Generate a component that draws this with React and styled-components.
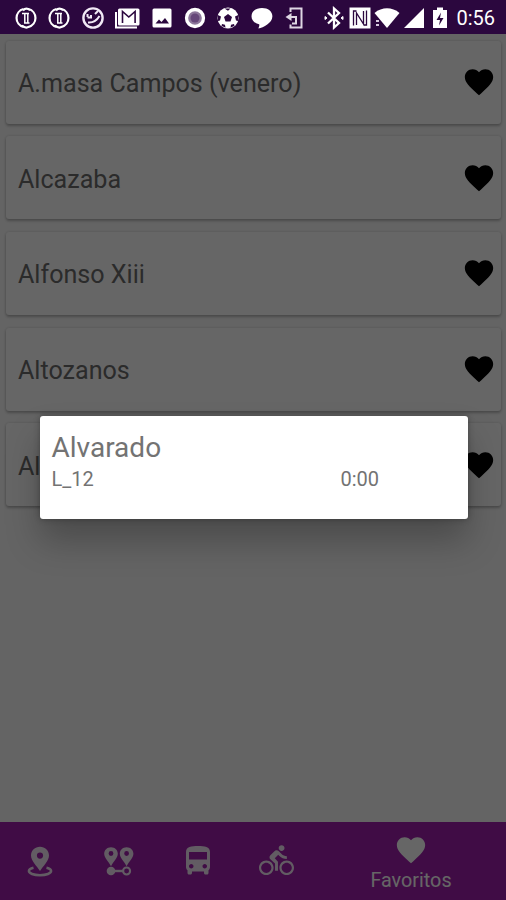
import React from 'react';
import styled, { createGlobalStyle } from 'styled-components';
import { MdFavorite, MdDirectionsBus, MdDirectionsBike } from 'react-icons/md';

const stops = ['A.masa Campos (venero)', 'Alcazaba', 'Alfonso Xiii', 'Altozanos', 'Alvarado'];

const GlobalStyle = createGlobalStyle`
    * {
        box-sizing: border-box;
    }
    body {
        margin: 0;
        font-family: Roboto, "Liberation Sans", sans-serif;
    }
    svg {
        display: block;
    }
`;

const CoinIcon = () => (
    <Glyph viewBox="0 0 24 24">
        <path d="M9.5 3A9.3 9.3 0 0 0 9.5 21M14.5 3A9.3 9.3 0 0 1 14.5 21M9 4.5Q12 1 16 4M8 19.5Q12 23 15 20.5" fill="none" stroke="#fff" strokeWidth="2.2" />
        <path d="M8 7.500h7M10.800 7v10M13.800 7v10M10 17h5.500" fill="none" stroke="#fff" strokeWidth="1.5" />
    </Glyph>
);

const FaceIcon = () => (
    <Glyph viewBox="0 0 24 24">
        <circle cx="12" cy="12" r="9.6" fill="none" stroke="#f1e9f5" strokeWidth="2.4" />
        <path d="M6.5 8v3M6.5 11.5h3.5V9M14 8l3-3M7 16.5c5 .5 8.500-1.500 11.500-6.500" fill="none" stroke="#f1e9f5" strokeWidth="2" />
    </Glyph>
);

const MailIcon = () => (
    <Glyph viewBox="0 0 26 24" $width={26}>
        <path d="M2 6v15.5h21" fill="none" stroke="#fff" strokeWidth="2" />
        <rect x="4" y="2.5" width="21.5" height="17" rx="1.5" fill="#fff" />
        <path d="M8.5 17V5.5l6.3 5.5 6.3-5.5V17" fill="none" stroke="#2b073e" strokeWidth="1.6" />
    </Glyph>
);

const ImageIcon = () => (
    <Glyph viewBox="0 0 24 24">
        <rect x="2.5" y="2.5" width="19" height="19" rx="1.5" fill="#fff" />
        <path d="M5.5 17.5l3.5-4 2.5 2.5 3.5-4 4 5.5z" fill="#2b073e" />
    </Glyph>
);

const RecordIcon = () => (
    <Glyph viewBox="0 0 24 24">
        <circle cx="12" cy="12" r="8.5" fill="#8d789b" stroke="#fff" strokeWidth="3.3" />
        <circle cx="12" cy="12" r="4.5" fill="#66487a" />
    </Glyph>
);

const BallIcon = () => (
    <Glyph viewBox="0 0 24 24">
        <circle cx="12" cy="12" r="10.5" fill="#fff" />
        <path d="M12 8l4 2.9-1.5 4.6h-5L8 10.9zM8.5 2.5h6L12 4.8zM1.8 9l3.2 1.5-1 4-2 .5zM22.2 9L19 10.5l1 4 2 .5zM6 18l3 .8.5 2.9-4-2zM18 18l-3 .8-.5 2.9 4-2z" fill="#2b073e" />
    </Glyph>
);

const ChatIcon = () => (
    <Glyph viewBox="0 0 24 24">
        <path d="M12 2C5.800 2 1.500 5.500 1.500 10.200c0 4 3 7 7.500 8 .8.300 0 2.500-.6 4.300 5-1 14-5.500 14-12.300C22.400 5.500 18.200 2 12 2z" fill="#fff" />
    </Glyph>
);

const ExitIcon = () => (
    <Glyph viewBox="0 0 24 24">
        <path d="M7.5 6V2.5h11v19h-11v-3M6 11h7v6.5H9" fill="none" stroke="#ded6e3" strokeWidth="2" />
        <path d="M8.5 7v8L2.5 11z" fill="#ded6e3" />
    </Glyph>
);

const BluetoothIcon = () => (
    <Glyph viewBox="0 0 24 24">
        <path d="M6 6.5l11 10.5-5 4.5v-19L17 7 6 17.5" fill="none" stroke="#fff" strokeWidth="2.3" />
        <path d="M3 10.5l2 1.5-2 1.5zM21 10.5l-2 1.5 2 1.5z" fill="#fff" stroke="#fff" />
    </Glyph>
);

const NfcIcon = () => (
    <Glyph viewBox="0 0 24 24">
        <path d="M1.500 1.500h21v21h-21z" fill="#fff" />
        <path d="M8.500 5H5.500v14.500M8.500 19V7l7 11V5M15.500 19h3V4.500" fill="none" stroke="#2b073e" strokeWidth="1.3" />
    </Glyph>
);

const WifiIcon = () => (
    <Glyph viewBox="0 0 26 24" $width={26}>
        <path d="M.5 7C8 .8 18 .8 25.500 7L13 22z" fill="#fff" />
        <path d="M2 15h3M2 19h3" stroke="#d8cbe0" strokeWidth="2" />
    </Glyph>
);

const SignalIcon = () => (
    <Glyph viewBox="0 0 24 24">
        <path d="M22 2v20H2z" fill="#fff" />
    </Glyph>
);

const BatteryIcon = () => (
    <Glyph viewBox="0 0 24 24">
        <path d="M9 1.5h6V4h4v18H5V4h4z" fill="#fff" />
        <path d="M13 6.5L8.5 14H12l-1 5.5L15.5 12H12z" fill="#2b073e" />
    </Glyph>
);

const PinIcon = () => (
    <NavGlyph viewBox="0 0 36 36">
        <path d="M11.500 24.800c-3 .7-4.600 1.800-4.600 3.300 0 2.300 4.700 4.100 11.100 4.100s11.100-1.800 11.100-4.100c0-1.500-1.600-2.600-4.600-3.300" fill="none" stroke="currentColor" strokeWidth="2.5" />
        <path fillRule="evenodd" d="M18 3.800c-5 0-9 3.900-9 8.800 0 5.700 6 10.500 9 15.500 3-5 9-9.800 9-15.500 0-4.900-4-8.800-9-8.800zm0 5.700a3.100 3.100 0 1 1 0 6.200 3.100 3.100 0 0 1 0-6.200z" fill="currentColor" />
    </NavGlyph>
);

const RouteIcon = () => (
    <NavGlyph viewBox="0 0 36 36">
        <g transform="translate(0 .7)">
            <path fillRule="evenodd" d="M10 3.500c-3.900 0-6.800 2.900-6.800 6.500 0 4 4.400 7.500 6.800 12.500 2.400-5 6.800-8.500 6.800-12.500 0-3.600-2.900-6.500-6.800-6.500zm0 3.900a2.400 2.400 0 1 1 0 4.800 2.400 2.400 0 0 1 0-4.800zM25.600 3.500c-3.900 0-6.800 2.900-6.800 6.500 0 4 4.400 7.500 6.800 12.500 2.400-5 6.800-8.500 6.800-12.500 0-3.600-2.900-6.500-6.800-6.500zm0 3.900a2.400 2.400 0 1 1 0 4.800 2.400 2.400 0 0 1 0-4.800z" fill="currentColor" />
            <circle cx="10" cy="27.300" r="4.300" fill="currentColor" />
            <path d="M13 27.300h9" stroke="currentColor" strokeWidth="2.4" />
            <circle cx="25.600" cy="27.300" r="3.500" fill="none" stroke="currentColor" strokeWidth="2.1" />
        </g>
    </NavGlyph>
);

class App extends React.Component {
    render() {
        return (
            <Screen>
                <GlobalStyle />
                <StatusBar>
                    <Notifications>
                        <CoinIcon />
                        <CoinIcon />
                        <FaceIcon />
                        <MailIcon />
                        <ImageIcon />
                        <RecordIcon />
                        <BallIcon />
                        <ChatIcon />
                        <ExitIcon />
                    </Notifications>
                    <SystemIcons>
                        <BluetoothIcon />
                        <NfcIcon />
                        <WifiIcon />
                        <SignalIcon />
                        <BatteryIcon />
                    </SystemIcons>
                    <Clock>0:56</Clock>
                </StatusBar>
                <StopList>
                    {stops.map(stop => (
                        <StopCard key={stop}>
                            <StopName>{stop}</StopName>
                            <MdFavorite size={34} />
                        </StopCard>
                    ))}
                </StopList>
                <BottomNav>
                    <NavItem><PinIcon /></NavItem>
                    <NavItem><RouteIcon /></NavItem>
                    <NavItem><MdDirectionsBus size={36} /></NavItem>
                    <NavItem><MdDirectionsBike size={35} /></NavItem>
                    <NavItem $active>
                        <MdFavorite size={34} />
                        <NavLabel>Favoritos</NavLabel>
                    </NavItem>
                </BottomNav>
                <Backdrop>
                    <Dialog>
                        <DialogTitle>Alvarado</DialogTitle>
                        <Arrival>
                            <span>L_12</span>
                            <span>0:00</span>
                        </Arrival>
                    </Dialog>
                </Backdrop>
            </Screen>
        );
    }
}

const Screen = styled.div`
    position: relative;
    display: flex;
    flex-direction: column;
    width: 506px;
    height: 900px;
    overflow: hidden;
    background: #fafafa;
`;

const StatusBar = styled.header`
    display: flex;
    align-items: center;
    flex: none;
    height: 34px;
    padding: 1px 11px 0 14px;
    background: #2b073e;
    color: #fff;
`;

const Glyph = styled.svg`
    flex: none;
    width: ${props => props.$width || 24}px;
    height: 24px;
`;

const Notifications = styled.div`
    display: flex;
    justify-content: space-between;
    width: 293px;
`;

const SystemIcons = styled.div`
    display: flex;
    justify-content: space-between;
    width: 130px;
    margin-left: 15px;
`;

const Clock = styled.span`
    margin-left: auto;
    font-size: 20px;
    line-height: 24px;
`;

const StopList = styled.main`
    display: flex;
    flex: 1;
    flex-direction: column;
    gap: 12.7px;
    padding: 6.5px 5px 0 6px;
`;

const StopCard = styled.article`
    display: flex;
    align-items: center;
    justify-content: space-between;
    flex: none;
    height: 83px;
    padding: 0 5px 0 12px;
    border-radius: 3px;
    background: #fff;
    box-shadow: 0 2px 3px rgba(0, 0, 0, 0.24), 0 0 3px rgba(0, 0, 0, 0.14);
    color: #000;
`;

const StopName = styled.span`
    padding-top: 3px;
    color: #6c6c6c;
    font-size: 25.1px;
`;

const BottomNav = styled.nav`
    display: flex;
    flex: none;
    height: 78px;
    background: #a020ac;
`;

const NavItem = styled.div`
    display: flex;
    flex-direction: column;
    align-items: center;
    flex: ${props => (props.$active ? '1' : '0 0 79px')};
    padding-top: ${props => (props.$active ? '11px' : '21px')};
    color: ${props => (props.$active ? '#fff' : '#f6e6f7')};
`;

const NavGlyph = styled.svg`
    width: 36px;
    height: 36px;
`;

const NavLabel = styled.span`
    font-size: 19.8px;
    line-height: 28px;
`;

const Backdrop = styled.div`
    position: absolute;
    inset: 34px 0 0;
    display: flex;
    align-items: center;
    justify-content: center;
    background: rgba(0, 0, 0, 0.6);
`;

const Dialog = styled.section`
    width: 428px;
    height: 103px;
    margin-left: 1px;
    padding: 15px 12px;
    border-radius: 3px;
    background: #fff;
    box-shadow: 0 22px 34px rgba(0, 0, 0, 0.25), 0 0 6px rgba(0, 0, 0, 0.3);
    color: #737373;
`;

const DialogTitle = styled.h2`
    margin: 0;
    font-size: 28px;
    font-weight: 400;
    line-height: 34px;
`;

const Arrival = styled.div`
    display: grid;
    grid-template-columns: 289px 1fr;
    font-size: 20px;
    line-height: 28px;
`;

export default App;
